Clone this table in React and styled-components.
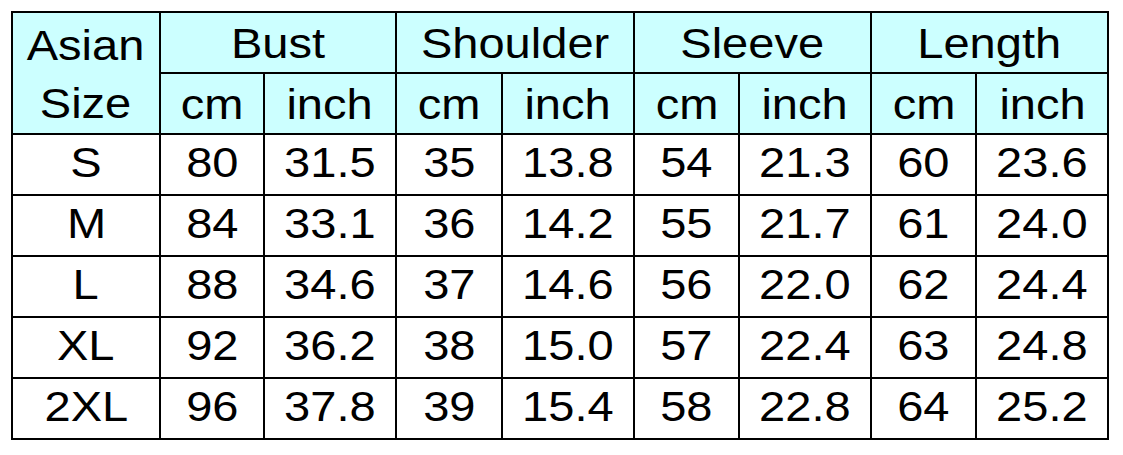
import styled, { createGlobalStyle } from "styled-components"

const Global = createGlobalStyle`
  html, body {
    margin: 0;
    background: #fff;
  }
  body {
    font-family: "Liberation Sans", Arial, sans-serif;
    color: #000;
  }
`

const Page = styled.div`
  padding: 11px 0 0 11px;
`

const Table = styled.table`
  border-collapse: collapse;
  table-layout: fixed;
  width: 1096px;
  border: 2px solid #000;
`

const Cell = styled.td`
  border: 2px solid #000;
  height: 56px;
  padding: ${({ $head }) => ($head ? "3px 0 0" : "0 0 3px")};
  text-align: center;
  vertical-align: middle;
  font-size: 42px;
  line-height: ${({ $tall }) => ($tall ? "58px" : "44px")};
  background: ${({ $head }) => ($head ? "#ccffff" : "#fff")};
`

const Txt = styled.span`
  display: inline-block;
  transform: scaleX(1.12);
`

const widths = [148, 104, 132, 106, 132, 105, 132, 105, 132]
const groups = ["Bust", "Shoulder", "Sleeve", "Length"]

const rows = [
  ["S", 80, "31.5", 35, "13.8", 54, "21.3", 60, "23.6"],
  ["M", 84, "33.1", 36, "14.2", 55, "21.7", 61, "24.0"],
  ["L", 88, "34.6", 37, "14.6", 56, "22.0", 62, "24.4"],
  ["XL", 92, "36.2", 38, "15.0", 57, "22.4", 63, "24.8"],
  ["2XL", 96, "37.8", 39, "15.4", 58, "22.8", 64, "25.2"],
]

export default function App() {
  return (
    <Page>
      <Global />
      <Table>
        <colgroup>
          {widths.map((w, i) => (
            <col key={i} style={{ width: w }} />
          ))}
        </colgroup>
        <tbody>
          <tr>
            <Cell $head $tall rowSpan={2}>
              <Txt>
                Asian
                <br />
                Size
              </Txt>
            </Cell>
            {groups.map((g) => (
              <Cell $head colSpan={2} key={g}>
                <Txt>{g}</Txt>
              </Cell>
            ))}
          </tr>
          <tr>
            {groups.map((g) => [
              <Cell $head key={g + "cm"}>
                <Txt>cm</Txt>
              </Cell>,
              <Cell $head key={g + "in"}>
                <Txt>inch</Txt>
              </Cell>,
            ])}
          </tr>
          {rows.map((r) => (
            <tr key={r[0]}>
              {r.map((v, i) => (
                <Cell key={i}>
                  <Txt>{v}</Txt>
                </Cell>
              ))}
            </tr>
          ))}
        </tbody>
      </Table>
    </Page>
  )
}
